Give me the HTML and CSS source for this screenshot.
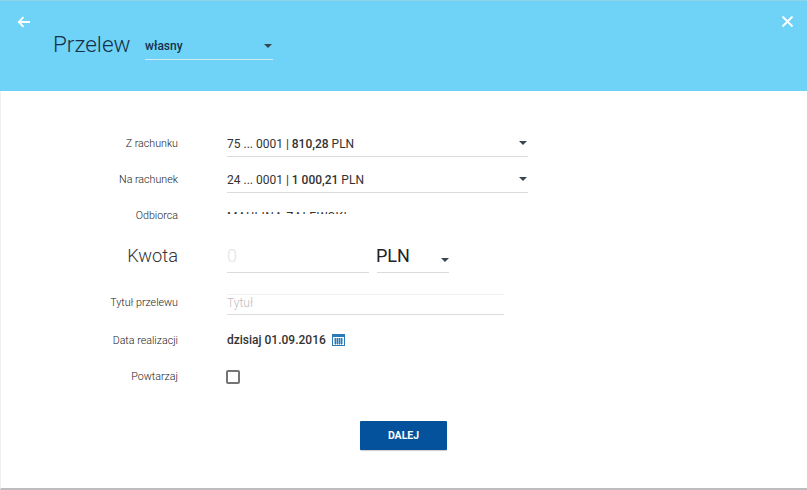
FILE: index.html
```html
<!DOCTYPE html>
<html lang="pl">
<head>
<meta charset="utf-8">
<title>Przelew</title>
<link rel="stylesheet" href="styles.css">
</head>
<body>
<div class="window">
  <header class="head">
    <svg class="ico-back" width="14" height="12" viewBox="0 0 14 12"><path d="M13 6H2.500M6.500 1.200L1.800 6l4.700 4.800" fill="none" stroke="#fff" stroke-width="1.800"/></svg>
    <svg class="ico-close" width="13" height="13" viewBox="0 0 13 13"><path d="M1.500 1.500l10 10M11.500 1.500l-10 10" fill="none" stroke="#fff" stroke-width="1.800"/></svg>
    <div class="head-title">
      <h1 class="title">Przelew</h1>
      <div class="type-select"><span>własny</span><i class="caret"></i></div>
    </div>
  </header>
  <main class="form">
    <div class="row r-from">
      <label class="lbl">Z rachunku</label>
      <div class="select"><span>75 ... 0001 | <b>810,28</b> PLN</span><i class="caret"></i></div>
    </div>
    <div class="row r-to">
      <label class="lbl">Na rachunek</label>
      <div class="select"><span>24 ... 0001 | <b>1 000,21</b> PLN</span><i class="caret"></i></div>
    </div>
    <div class="row r-rec">
      <label class="lbl">Odbiorca</label>
      <div class="clip"><span>MAULINA ZALEWSKI</span></div>
    </div>
    <div class="row r-amt">
      <label class="lbl big">Kwota</label>
      <div class="amount">0</div>
      <div class="currency"><span class="cur-code">PLN</span><i class="caret"></i></div>
    </div>
    <div class="row r-title">
      <label class="lbl">Tytuł przelewu</label>
      <div class="title-input">Tytuł</div>
    </div>
    <div class="row r-date">
      <label class="lbl">Data realizacji</label>
      <div class="date"><b>dzisiaj 01.09.2016</b>
        <svg class="ico-cal" width="13" height="12" viewBox="0 0 13 12"><rect x="0.500" y="0.500" width="12" height="11" fill="#fff" stroke="#2a7ab8"/><rect x="0" y="0" width="13" height="3" fill="#2a7ab8"/><path d="M2 5h9M2 7h9M2 9h9M3.500 4v6.500M5.500 4v6.500M7.500 4v6.500M9.500 4v6.500" stroke="#2a7ab8" stroke-width="1"/></svg>
      </div>
    </div>
    <div class="row r-rep">
      <label class="lbl">Powtarzaj</label>
      <div class="check"></div>
    </div>
    <div class="actions"><button class="btn">DALEJ</button></div>
  </main>
</div>
</body>
</html>
```
FILE: styles.css
```css
* { box-sizing: border-box; }
html, body { margin: 0; padding: 0; }
body { width: 807px; height: 490px; background: #fff; font-family: Roboto, "Liberation Sans", sans-serif; overflow: hidden; }
.window { height: 490px; border-bottom: 2px solid #bdbdbd; border-left: 1px solid #f0f0f0; display: flex; flex-direction: column; }
.head { position: relative; height: 91px; margin-left: -1px; background: #6fd3f7; border-top: 1px solid #8fd3e8; padding: 30px 0 0 53px; flex: none; }
.ico-back { position: absolute; left: 17px; top: 15px; }
.ico-close { position: absolute; left: 781px; top: 14px; }
.head-title { display: flex; align-items: flex-start; }
.title { margin: -1px 0 0; font-size: 22.500px; font-weight: 300; line-height: 28px; color: #16304a; width: 92px; }
.type-select { width: 128px; height: 29px; border-bottom: 1px solid #d5e9f2; display: flex; justify-content: space-between; padding: 7px 0 0 0; font-size: 12px; font-weight: 500; color: #16304a; line-height: 16px; }
.type-select .caret { margin: 6px 1px 0 0; }
.caret { display: block; width: 0; height: 0; border-left: 4.500px solid transparent; border-right: 4.500px solid transparent; border-top: 4px solid #37474f; flex: none; }
.form { padding-top: 33px; flex: 1; }
.row { display: flex; align-items: flex-start; }
.lbl { width: 177px; text-align: right; font-size: 10.700px; font-weight: 300; color: #222; line-height: 14px; margin-right: 49px; flex: none; }
.select { width: 301px; height: 33px; border-bottom: 1px solid #dcdcdc; display: flex; justify-content: space-between; font-size: 12px; color: #333; line-height: 16px; padding-top: 12px; }
.select b { font-weight: 500; }
.select .caret { margin: 5px 1px 0 0; }
.r-from .lbl { padding-top: 13px; }
.r-to { margin-top: 3px; }
.r-to .lbl { padding-top: 13px; }
.r-rec { height: 30px; }
.r-rec .lbl { padding-top: 16px; }
.clip { height: 21px; overflow: hidden; font-size: 12px; letter-spacing: .5px; white-space: nowrap; color: #333; width: 200px; line-height: 14px; padding-top: 17px; }
.r-amt { margin-top: 15px; height: 56px; }
.lbl.big { font-size: 18.300px; font-weight: 300; line-height: 22px; padding-top: 7px; color: #333; }
.amount { width: 142px; height: 35px; border-bottom: 1px solid #dcdcdc; font-size: 18px; font-weight: 300; color: #e4e4e4; line-height: 22px; padding-top: 7px; margin-right: 8px; }
.currency { width: 72px; height: 35px; border-bottom: 1px solid #dcdcdc; display: flex; justify-content: space-between; font-size: 18px; color: #222; line-height: 22px; padding: 7px 0 0 0; }
.cur-code { margin-left: -1px; }
.currency .caret { margin: 13px 0 0 0; }
.r-title { height: 30px; }
.r-title .lbl { padding-top: 2px; }
.title-input { width: 277px; height: 21px; border-top: 1px solid #f2f2f2; border-bottom: 1px solid #dcdcdc; font-size: 12px; font-weight: 300; color: #bdbdbd; line-height: 16px; }
.r-date { margin-top: 8px; height: 36px; }
.r-date .lbl { padding-top: 2px; }
.date { display: flex; align-items: center; font-size: 12px; color: #333; line-height: 16px; }
.date b { font-weight: 500; }
.ico-cal { margin-left: 6px; }
.r-rep .lbl { padding-top: 2px; }
.check { width: 14px; height: 14px; border: 2px solid #757575; border-radius: 2px; margin: 2px 0 0 -1px; }
.actions { padding-left: 359px; margin-top: 37px; }
.btn { width: 87px; height: 29px; border: 0; border-radius: 1px; background: #03529b; color: #fff; font: 700 10.500px Roboto, sans-serif; box-shadow: 0 1px 1px rgba(0,0,0,.2); padding: 0; }
```
